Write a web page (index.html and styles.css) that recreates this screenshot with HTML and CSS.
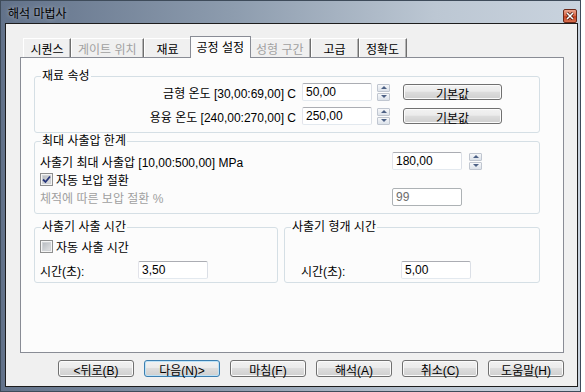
FILE: index.html
```html
<!DOCTYPE html>
<html lang="ko">
<head>
    <meta charset="UTF-8">
    <title>해석 마법사</title>
    <link rel="stylesheet" href="styles.css">
</head>
<body>
    <div class="window">
        <div class="titlebar">
            <span class="title">해석 마법사</span>
            <span class="close-btn">
                <svg width="8" height="8" viewBox="0 0 8 8"><path d="M1 1 L7 7 M7 1 L1 7" stroke="#3a1208" stroke-width="3"/><path d="M1 1 L7 7 M7 1 L1 7" stroke="#fff" stroke-width="1.6"/></svg>
            </span>
        </div>

        <div class="client">
            <div class="tabs">
                <div class="tab">시퀀스</div>
                <div class="tab disabled">게이트 위치</div>
                <div class="tab">재료</div>
                <div class="tab active">공정 설정</div>
                <div class="tab disabled">성형 구간</div>
                <div class="tab">고급</div>
                <div class="tab">정확도</div>
            </div>

            <div class="panel">
                <fieldset class="group group-wide">
                    <legend>재료 속성</legend>
                    <div class="group-body material">
                        <div class="row">
                            <label class="label-right">금형 온도 [30,00:69,00] C</label>
                            <input class="field" type="text" value="50,00">
                            <span class="spin"><span class="up"></span><span class="down"></span></span>
                            <button class="btn btn-default-value">기본값</button>
                        </div>
                        <div class="row">
                            <label class="label-right">용융 온도 [240,00:270,00] C</label>
                            <input class="field" type="text" value="250,00">
                            <span class="spin"><span class="up"></span><span class="down"></span></span>
                            <button class="btn btn-default-value">기본값</button>
                        </div>
                    </div>
                </fieldset>

                <fieldset class="group group-wide group-pressure">
                    <legend>최대 사출압 한계</legend>
                    <div class="group-body pressure">
                        <label>사출기 최대 사출압 [10,00:500,00] MPa</label>
                        <input class="field" type="text" value="180,00">
                        <span class="spin"><span class="up"></span><span class="down"></span></span>

                        <div class="check-row span-all">
                            <span class="box checked">
                                <svg width="11" height="11" viewBox="0 0 11 11"><path d="M2 5.5 L4.5 8 L9 2.5" fill="none" stroke="#27367a" stroke-width="1.8"/></svg>
                            </span>
                            <span>자동 보압 절환</span>
                        </div>

                        <label class="disabled">체적에 따른 보압 절환 %</label>
                        <input class="field" type="text" value="99" disabled>
                    </div>
                </fieldset>

                <div class="pair">
                    <fieldset class="group group-left">
                        <legend>사출기 사출 시간</legend>
                        <div class="group-body time">
                            <div class="check-row span-all">
                                <span class="box"></span>
                                <span>자동 사출 시간</span>
                            </div>
                            <label>시간(초):</label>
                            <input class="field" type="text" value="3,50">
                        </div>
                    </fieldset>

                    <fieldset class="group group-right">
                        <legend>사출기 형개 시간</legend>
                        <div class="group-body time no-check">
                            <label>시간(초):</label>
                            <input class="field" type="text" value="5,00">
                        </div>
                    </fieldset>
                </div>
            </div>

            <div class="buttons">
                <button class="btn">&lt;뒤로(B)</button>
                <button class="btn focused">다음(N)&gt;</button>
                <button class="btn">마침(F)</button>
                <button class="btn">해석(A)</button>
                <button class="btn">취소(C)</button>
                <button class="btn">도움말(H)</button>
            </div>
        </div>
    </div>
</body>
</html>
```

FILE: styles.css
```css
body {
    margin: 0;
    background-color: #fff;
    font-family: "Liberation Sans", "Noto Sans CJK KR", sans-serif;
    font-size: 12px;
    color: #000;
}

.window {
    width: 581px;
    height: 392px;
    box-sizing: border-box;
    padding: 0 2px 4px 4px;
    display: flex;
    flex-direction: column;
    border: 1px solid #3e4b5a;
    background: linear-gradient(to right, #62728a 0%, #8d9cae 40%, #bcc7d3 75%, #c9d3de 100%);
}

.titlebar {
    height: 22px;
    display: flex;
    justify-content: space-between;
    padding: 0 1px 0 3px;
}
.title {
    align-self: center;
    text-shadow: 0 0 4px rgba(255, 255, 255, 0.5);
}
.close-btn {
    align-self: flex-end;
    width: 14px;
    height: 14px;
    box-sizing: border-box;
    border: 1px solid #6b2818;
    border-radius: 2px;
    background: linear-gradient(#eba58e, #d9694a 45%, #c2401f 55%, #d8704f);
    display: flex;
    align-items: center;
    justify-content: center;
}

.client {
    flex: 1;
    border: 1px solid #1d1d1d;
    background-color: #f0f0f0;
    display: flex;
    flex-direction: column;
    padding: 12px 13px 0 14px;
}

/* tabs */
.tabs {
    display: flex;
    align-items: flex-end;
    height: 21px;
    padding-left: 3px;
}
.tab {
    height: 19px;
    box-sizing: border-box;
    min-width: 48px;
    padding: 0 6px;
    display: flex;
    align-items: center;
    justify-content: center;
    border-top: 1px solid #fff;
    border-left: 1px solid #fff;
    border-right: 1px solid #6e6e6e;
    box-shadow: inset -1px 0 #b4b4b4;
    background-color: #f0f0f0;
}
.tab.disabled {
    color: #a0a0a0;
}
.tab.active {
    position: relative;
    height: 22px;
    margin: 0 -2px -1px;
    padding-bottom: 2px;
    background-color: #fcfcfc;
    border: 1px solid #898c95;
    border-bottom: none;
    box-shadow: none;
}

.panel {
    height: 296px;
    box-sizing: border-box;
    border: 1px solid #898c95;
    background-color: #fcfcfc;
    padding: 12px 22px 0 13px;
}

/* group boxes */
.group {
    margin: 0;
    padding: 0;
    min-width: 0;
    box-sizing: border-box;
    border: 1px solid #d5dfe5;
    border-radius: 3px;
}
.group legend {
    margin-left: 6px;
    padding: 0 1px;
    line-height: 13px;
}
.group-wide {
    width: 506px;
}
.group-pressure {
    margin-top: 2px;
}
.pair {
    display: flex;
    gap: 6px;
    margin-top: 7px;
}
.group-left {
    width: 244px;
}
.group-right {
    width: 256px;
}

.material {
    padding: 0 37px 7px 5px;
}
.row {
    display: flex;
    align-items: center;
    height: 18px;
}
.row + .row {
    margin-top: 6px;
}
.label-right {
    flex: 1;
    text-align: right;
}

.pressure {
    display: grid;
    grid-template-columns: 1fr 70px 13px;
    column-gap: 7px;
    row-gap: 2px;
    align-items: center;
    padding: 4px 57px 7px 5px;
}
.span-all {
    grid-column: 1 / -1;
}

.time {
    display: grid;
    grid-template-columns: 98px 70px;
    align-items: center;
    row-gap: 7px;
    padding: 4px 0 3px 5px;
}
.time.no-check {
    grid-template-columns: 100px 70px;
    padding: 27px 0 3px 16px;
}

.disabled {
    color: #a0a0a0;
}

/* controls */
.field {
    width: 70px;
    height: 18px;
    box-sizing: border-box;
    margin: 0;
    padding: 0 3px;
    font: inherit;
    color: #000;
    background-color: #fff;
    border: 1px solid;
    border-color: #abadb3 #dbdfe6 #e3e9ef #e2e3ea;
    border-radius: 2px;
}
.material .field {
    margin-left: 6px;
}
.field:disabled {
    color: #6d6d6d;
    border-color: #adb2b5;
    background-color: #fff;
}

.spin {
    width: 13px;
    height: 17px;
    display: flex;
    flex-direction: column;
    gap: 1px;
}
.material .spin {
    margin-left: 5px;
}
.spin span {
    flex: 1;
    border: 1px solid #c0c6d0;
    border-radius: 1px;
    background: linear-gradient(#f7f8fa, #dce2ea);
    display: flex;
    align-items: center;
    justify-content: center;
}
.spin .up::before,
.spin .down::before {
    content: "";
    border-left: 3px solid transparent;
    border-right: 3px solid transparent;
}
.spin .up::before {
    border-bottom: 3px solid #4d6185;
}
.spin .down::before {
    border-top: 3px solid #4d6185;
}

.check-row {
    display: flex;
    align-items: center;
    gap: 3px;
    height: 14px;
}
.time .check-row {
    height: 16px;
}
.box {
    width: 13px;
    height: 13px;
    box-sizing: border-box;
    border: 1px solid #8e8f8f;
    background: linear-gradient(135deg, #aeb3b9, #e9e9ea);
    box-shadow: inset 0 0 0 1px #f4f4f4, inset 0 0 0 2px #d0d3d6;
    display: flex;
    align-items: center;
    justify-content: center;
}

.btn {
    width: 76px;
    height: 17px;
    box-sizing: border-box;
    margin: 0;
    padding: 0;
    font: inherit;
    color: #000;
    border: 1px solid #707070;
    border-radius: 3px;
    background: linear-gradient(#f2f2f2, #ebebeb 45%, #dddddd 50%, #cfcfcf);
    box-shadow: inset 0 0 0 1px #fbfbfb;
}
.btn.focused {
    border-color: #3c7fb1;
    box-shadow: inset 0 0 0 1px #bfe3f7;
}
.btn-default-value {
    width: 99px;
    height: 16px;
    margin-left: 13px;
}

.buttons {
    display: flex;
    justify-content: flex-end;
    gap: 10px;
    margin-top: 7px;
}
```
